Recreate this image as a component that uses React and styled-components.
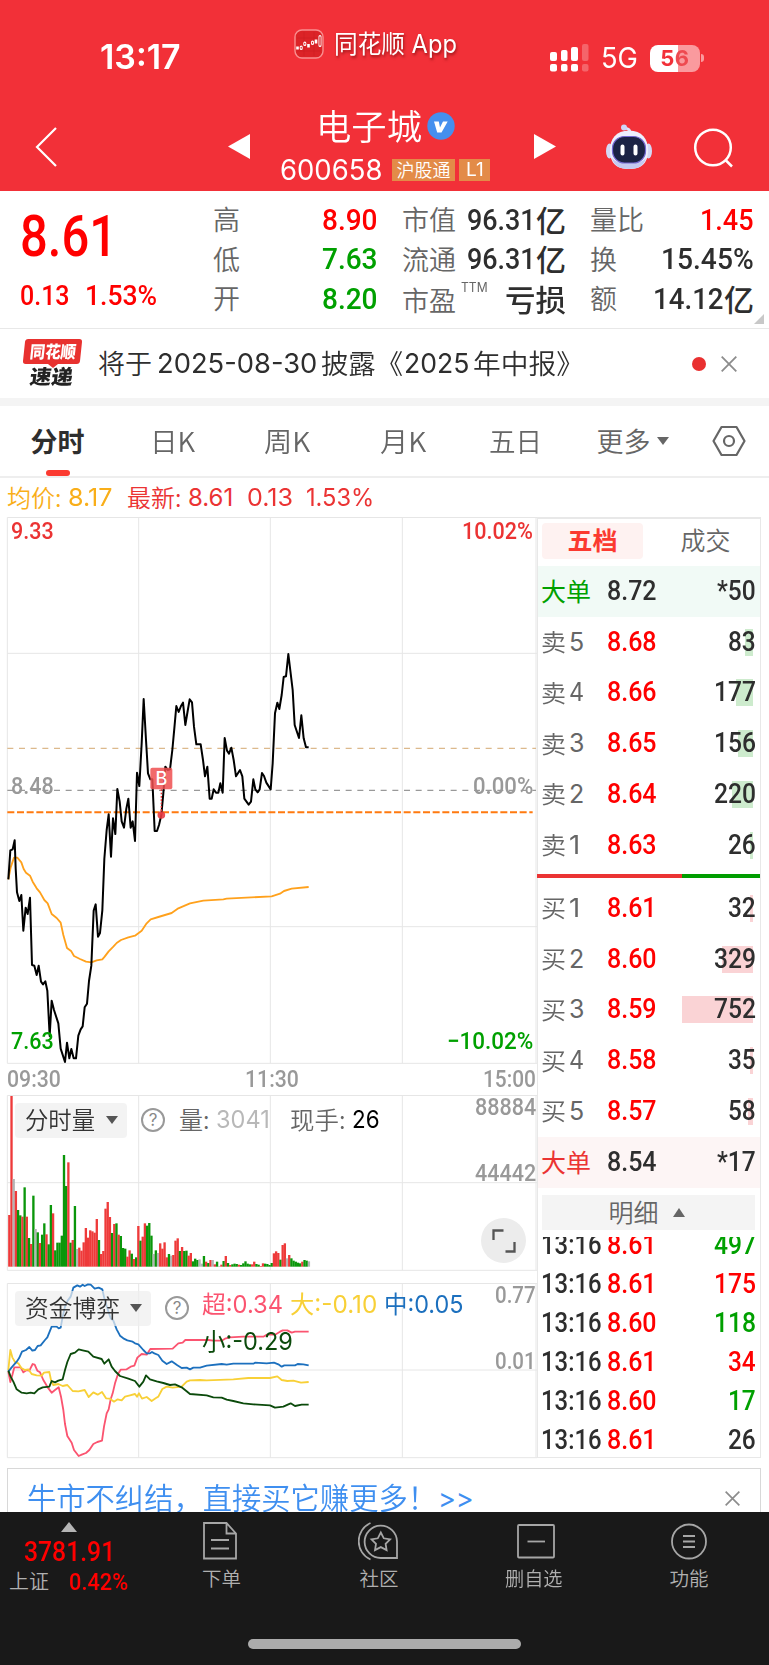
import React, { useLayoutEffect, useRef, useState } from "react";
import styled, { createGlobalStyle } from "styled-components";

const CJK = '"Noto Sans CJK SC", sans-serif';
const DIN = 'Roboto, "Noto Sans CJK SC", sans-serif';
const SF = 'Inter, "Noto Sans CJK SC", sans-serif';

const RED = "#ff0000";
const GREEN = "#00a000";
const INK = "#2e2e2e";
const GREY = "#666666";
const GRID = "#e6e6e6";

const GlobalStyle = createGlobalStyle`
  * { box-sizing: border-box; }
  body { margin: 0; background: #fff; font-family: ${CJK}; color: ${INK}; }
`;

/* Text squeezed or stretched horizontally so that it fills a given width. */
const FitBox = styled.span`
  display: inline-block;
  flex: none;
  width: ${(p) => p.$w}px;
  white-space: pre;
  line-height: 1;
`;
const FitInner = styled.span`
  display: inline-block;
  transform-origin: 0 50%;
`;
function Fit({ w, className, children }) {
  const ref = useRef(null);
  const [k, setK] = useState(1);
  useLayoutEffect(() => {
    if (ref.current.offsetWidth) setK(w / ref.current.offsetWidth);
  }, [w, children]);
  return (
    <FitBox $w={w} className={className}>
      <FitInner ref={ref} style={{ transform: `scaleX(${k})` }}>{children}</FitInner>
    </FitBox>
  );
}

const Digits = styled(Fit)`
  font-family: ${DIN};
  font-size: ${(p) => p.$size || 27}px;
  font-weight: ${(p) => p.$weight || 500};
  color: ${(p) => p.$color || INK};
`;
const Sans = styled(Fit)`
  font-family: ${SF};
  font-size: ${(p) => p.$size || 24}px;
  font-weight: ${(p) => p.$weight || 400};
  color: ${(p) => p.$color || GREY};
`;
const Han = styled(Fit)`
  font-family: ${CJK};
  font-size: ${(p) => p.$size || 27}px;
  font-weight: ${(p) => p.$weight || 350};
  color: ${(p) => p.$color || GREY};
  translate: 0 -0.05em;
`;

const Screen = styled.div`
  width: 769px;
  height: 1665px;
  overflow: hidden;
  display: flex;
  flex-direction: column;
  background: #fff;
`;

/* ---------- header ---------- */
const Header = styled.header`
  flex: none;
  height: 191px;
  background: #f23038;
  display: flex;
  flex-direction: column;
`;
const StatusBar = styled.div`
  height: 102px;
  padding: 29px 64px 0 100px;
  display: flex;
  align-items: flex-start;
`;
const Clock = styled.div`
  width: 194px;
  padding-top: 12px;
`;
const AppBadge = styled.div`
  display: flex;
  align-items: center;
  gap: 10px;
  height: 30px;
  width: 256px;
  text-shadow: 1px 2px 3px rgba(90, 0, 0, 0.6);
`;
const Radio = styled.div`
  display: flex;
  align-items: center;
  height: 28px;
  margin-top: 15px;
  gap: 12px;
`;
const Battery = styled.div`
  width: 50px;
  height: 27px;
  border-radius: 8px;
  background: linear-gradient(90deg, #fff 56%, #fa9a9e 56%);
  display: flex;
  align-items: center;
  justify-content: center;
`;
const BatteryTip = styled.div`
  width: 3px;
  height: 8px;
  margin-left: -11px;
  border-radius: 0 3px 3px 0;
  background: #fa9a9e;
`;
const BatteryText = styled.span`
  font: 700 22px/1 ${SF};
  letter-spacing: 0.5px;
  background: linear-gradient(90deg, #f23038 50%, #ee4a50 50%);
  background-clip: text;
  color: transparent;
`;
const TitleBar = styled.div`
  height: 89px;
  padding: 0 35px;
  display: grid;
  grid-template-columns: 193px 37px 269px 71px 88px 1fr;
`;
const TitleSlot = styled.div`
  padding-top: ${(p) => p.$top}px;
  svg { display: block; }
`;
const StockTitle = styled.div`
  padding-left: 15px;
  padding-top: 5px;
`;
const NameRow = styled.div`
  display: flex;
  align-items: center;
  gap: 5px;
  height: 38px;
  padding-left: 36px;
`;
const CodeRow = styled.div`
  display: flex;
  align-items: center;
  height: 22px;
  margin-top: 14px;
`;
const MarketTag = styled.span`
  display: flex;
  align-items: center;
  justify-content: center;
  width: ${(p) => p.$w}px;
  height: 22px;
  margin-left: ${(p) => p.$gap}px;
  background: #e38b48;
`;

/* ---------- quote ---------- */
const QuotePanel = styled.section`
  flex: none;
  position: relative;
  height: 138px;
  padding: 9px 15px 0 20px;
  display: grid;
  grid-template-columns: 169px 165px 164px 164px;
  column-gap: 24px;
  border-bottom: 1px solid #e8e8e8;
`;
const LastPrice = styled.div`
  padding: 8px 0 0 0;
  display: flex;
  flex-direction: column;
  gap: 17px;
`;
const ChangeRow = styled.div`
  display: flex;
  gap: 15px;
`;
const StatColumn = styled.div`
  display: flex;
  flex-direction: column;
`;
const Stat = styled.div`
  height: 39.5px;
  display: flex;
  align-items: center;
  justify-content: space-between;
`;
const StatValue = styled.span`
  display: flex;
  align-items: center;
`;
const LabelWithMark = styled.span`
  display: flex;
  align-items: flex-start;
  gap: 5px;
  padding-top: 3px;
`;
const TtmMark = styled(Sans)`
  margin-top: -6px;
`;
const CornerMark = styled.i`
  position: absolute;
  right: 5px;
  bottom: 4px;
  border-left: 10px solid transparent;
  border-bottom: 10px solid #c8c8c8;
`;

/* ---------- news ---------- */
const NewsRow = styled.section`
  flex: none;
  height: 77px;
  border-bottom: 8px solid #f4f4f4;
  padding: 0 32px 0 24px;
  display: flex;
  align-items: center;
`;
const NewsLogo = styled.div`
  width: 57px;
  height: 48px;
  margin-top: -2px;
  font: 900 18px/1 ${CJK};
`;
const LogoTop = styled.div`
  height: 25px;
  background: #e8312f;
  border-radius: 3px;
  transform: skewX(-6deg);
  display: flex;
  align-items: center;
  justify-content: center;
`;
const LogoNotch = styled.i`
  display: block;
  width: 0;
  margin: 0 auto -1px;
  border: 5px solid transparent;
  border-top: 4px solid #e8312f;
  border-bottom: 0;
`;
const LogoBottom = styled.div`
  padding-left: 6px;
  transform: skewX(-8deg);
  line-height: 20px;
`;
const NewsText = styled.p`
  flex: 1;
  margin: 0 0 0 17px;
  display: flex;
  align-items: center;
`;
const Gap = styled.i`
  flex: none;
  width: ${(p) => p.$w}px;
`;
const UnreadDot = styled.i`
  width: 14px;
  height: 14px;
  border-radius: 50%;
  background: #e93030;
  margin-right: 15px;
`;

/* ---------- tabs ---------- */
const Tabs = styled.nav`
  flex: none;
  height: 72px;
  border-bottom: 2px solid #eeeeee;
  display: grid;
  grid-template-columns: 115px 115px 114px 118px 107px 127px 65px;
  align-items: center;
`;
const Tab = styled.div`
  position: relative;
  height: 70px;
  display: flex;
  align-items: center;
  justify-content: center;
  gap: 6px;
  &::after {
    content: "";
    display: ${(p) => (p.$active ? "block" : "none")};
    position: absolute;
    bottom: 0;
    left: 46px;
    width: 24px;
    height: 6px;
    border-radius: 3px;
    background: #fb3a30;
  }
`;
const Caret = styled.i`
  width: 0;
  height: 0;
  border: ${(p) => p.$half || 6}px solid transparent;
  ${(p) => (p.$up ? "border-top: 0; border-bottom" : "border-bottom: 0; border-top")}: ${(p) => p.$h || 8}px solid
    ${(p) => p.$color || GREY};
`;
const Summary = styled.div`
  flex: none;
  height: 39px;
  padding: 1px 0 0 7px;
  display: flex;
  align-items: center;
`;

/* ---------- market area ---------- */
const Market = styled.main`
  flex: none;
  height: 951px;
  display: flex;
`;
const Charts = styled.div`
  width: 537px;
  display: flex;
  flex-direction: column;
`;
const Pane = styled.div`
  position: relative;
  flex: none;
  height: ${(p) => p.$h}px;
  margin-bottom: ${(p) => p.$gap || 0}px;
  svg { display: block; }
`;
const PaneLabel = styled.span`
  position: absolute;
  left: ${(p) => p.$x}px;
  top: ${(p) => p.$y}px;
  line-height: 1;
  display: flex;
`;
const TimeAxis = styled.div`
  flex: none;
  height: 28px;
  margin-top: -3px;
  padding: 0 1px 0 7px;
  display: flex;
  justify-content: space-between;
  align-items: flex-start;
`;
const PaneHead = styled.div`
  position: absolute;
  left: 15px;
  top: 7px;
  height: 36px;
  display: flex;
  align-items: center;
`;
const IndicatorPill = styled.div`
  flex: none;
  width: ${(p) => p.$w}px;
  height: 35px;
  padding: 0 9px 0 10px;
  border-radius: 4px;
  background: rgba(238, 238, 238, 0.72);
  display: flex;
  align-items: center;
  justify-content: space-between;
  margin-right: 14px;
`;
const ExpandButton = styled.div`
  position: absolute;
  left: 481px;
  top: 123px;
  width: 45px;
  height: 45px;
  border-radius: 50%;
  background: #ececec;
  display: grid;
  place-items: center;
`;

/* ---------- order book ---------- */
const Book = styled.aside`
  width: 224px;
  height: 941px;
  border: 1px solid #e8e8e8;
  border-top-width: 2px;
  display: flex;
  flex-direction: column;
`;
const BookTabs = styled.div`
  flex: none;
  height: 47px;
  padding: 4px;
  display: grid;
  grid-template-columns: 101px 1fr;
  column-gap: 12px;
`;
const BookTab = styled.div`
  height: 36px;
  padding-bottom: 1px;
  border-radius: 4px;
  display: flex;
  align-items: center;
  justify-content: center;
  background: ${(p) => (p.$active ? "#fef2f1" : "transparent")};
`;
const Level = styled.div`
  flex: none;
  height: 50.75px;
  padding: 0 4px 0 3px;
  display: grid;
  grid-template-columns: 66px 1fr auto;
  align-items: center;
  background: ${(p) => p.$bg || "transparent"};
`;
const LevelName = styled.span`
  display: flex;
  align-items: center;
  gap: 3px;
`;
const Volume = styled.span`
  height: 27px;
  width: 74px;
  display: flex;
  align-items: center;
  justify-content: flex-end;
  background: linear-gradient(${(p) => p.$color}, ${(p) => p.$color}) no-repeat;
  background-size: ${(p) => p.$bar}px 27px;
  background-position: calc(100% - 3px) 0;
`;
const Ratio = styled.div`
  flex: none;
  height: 4px;
  margin: 3px 0 5.5px -1px;
  background: linear-gradient(90deg, #eb3333 145px, #009d00 145px);
`;
const DetailHead = styled.div`
  flex: none;
  height: 35px;
  margin: 7px 5px 7px 4px;
  padding-right: 4px;
  background: #f4f4f4;
  display: flex;
  align-items: center;
  justify-content: center;
  gap: 14px;
`;
const Trades = styled.div`
  flex: 1;
  min-height: 0;
  overflow: hidden;
  display: flex;
  flex-direction: column;
  justify-content: flex-end;
  margin-bottom: -2.5px;
`;
const Trade = styled.div`
  flex: none;
  height: 39px;
  padding: 0 4px 0 3px;
  display: grid;
  grid-template-columns: 66px 1fr auto;
  align-items: center;
`;

/* ---------- promo + bottom nav ---------- */
const Promo = styled.div`
  flex: 1;
  margin: 0 8px 0 7px;
  border: 1px solid #d8d8d8;
  border-bottom: 0;
  padding: 14px 20px 0 19px;
  display: flex;
  justify-content: space-between;
  overflow: hidden;
`;
const PromoText = styled.span`
  display: flex;
  align-items: center;
  height: 30px;
`;
const BottomNav = styled.footer`
  flex: none;
  height: 153px;
  background: #191919;
  display: flex;
  flex-direction: column;
  align-items: center;
  justify-content: space-between;
  padding-bottom: 16px;
`;
const NavItems = styled.div`
  width: 100%;
  display: grid;
  grid-template-columns: 141px 158px 158px 157px 150px;
`;
const IndexCell = styled.div`
  padding: 10px 0 0 9px;
`;
const IndexTop = styled.div`
  display: flex;
  flex-direction: column;
  align-items: center;
  width: 120px;
  gap: 6px;
`;
const IndexRow = styled.div`
  display: flex;
  align-items: center;
  gap: 20px;
  margin-top: 4px;
`;
const NavItem = styled.div`
  padding-top: 9px;
  display: flex;
  flex-direction: column;
  align-items: center;
  gap: 8px;
`;
const NavLabel = styled(Han)`
  margin-left: ${(p) => p.$shift || 0}px;
`;
const HomeBar = styled.div`
  width: 273px;
  height: 10px;
  border-radius: 5px;
  background: #acacac;
`;

/* ---------- icons ---------- */
const AppIcon = () => (
  <svg width="30" height="30" viewBox="0 0 30 30" fill="none">
    <rect x="1" y="1" width="28" height="28" rx="7" fill="#dc2327" stroke="#f98f90" strokeWidth="1.4" />
    <path d="M3 9H27M3 22H27M10 3V27M20 3V27" stroke="#c81e22" strokeWidth=".5" />
    <path d="M3.500 17.500V20.500M14.500 15V18.500M22 10.500V14.500" stroke="#fff" strokeWidth="2.600" />
    <path d="M7.200 18v1.500M10.800 14v1.500M18.500 13v1.500M26 7.500v9" stroke="#fff" strokeWidth="3" strokeLinecap="round" />
    <path d="M7.200 18.500v.5M10.800 14.500v.5M18.500 13.500v.5M26 8v8" stroke="#dc2327" strokeWidth="1.300" strokeLinecap="round" />
  </svg>
);
const SignalIcon = () => (
  <svg width="39" height="28" viewBox="0 0 39 28" fill="#fff">
    <rect x="0" y="8" width="7" height="9" rx="2" />
    <rect x="11" y="6" width="6.500" height="11" rx="2" />
    <rect x="21" y="3" width="7" height="14" rx="2" />
    <rect x="32" y="0" width="6.500" height="17" rx="2" opacity=".25" />
    <rect x="0" y="20" width="7" height="7.500" rx="2" />
    <rect x="11" y="20" width="6.500" height="7.500" rx="2" />
    <rect x="21" y="20" width="7" height="7.500" rx="2" />
    <rect x="32" y="20" width="6.500" height="7.500" rx="2" opacity=".25" />
  </svg>
);
const BackIcon = () => (
  <svg width="22" height="40" viewBox="0 0 22 40" fill="none" stroke="#fff" strokeWidth="2.200">
    <path d="M21 1L2 20L21 39" />
  </svg>
);
const PlayIcon = ({ left }) => (
  <svg width="22" height="25" viewBox="0 0 22 25" fill="#fff">
    <path d={left ? "M22 0V25L0 12.500Z" : "M0 0V25L22 12.500Z"} />
  </svg>
);
const VerifiedIcon = () => (
  <svg width="28" height="28" viewBox="0 0 28 28">
    <circle cx="14" cy="14" r="13.700" fill="#458fee" />
    <path d="M7 9.500h4.800l1.200 6l3-6h4.700l-6.200 11h-4.300z" fill="#fff" />
  </svg>
);
const RobotIcon = () => (
  <svg width="48" height="46" viewBox="0 0 48 46">
    <path d="M25 8C25 4.500 22 5 19.500 3.500" stroke="#dfe3fb" strokeWidth="2.500" fill="none" />
    <circle cx="19" cy="3.500" r="3" fill="#cfd5f7" />
    <ellipse cx="4.500" cy="27" rx="3.500" ry="7.500" fill="#d4d8f5" />
    <ellipse cx="43.500" cy="27" rx="3.500" ry="7.500" fill="#d4d8f5" />
    <path d="M24 6.500C37 6.500 43 15 43 26C43 40 36 45 24 45S5 40 5 26C5 15 11 6.500 24 6.500Z" fill="#edeffd" />
    <path d="M24 39C33 39 38 38 41 34C39 41.500 34 45 24 45S9 41.500 7 34C10 38 15 39 24 39Z" fill="#c5c9f0" />
    <rect x="7.500" y="12.500" width="33" height="26.500" rx="12" fill="#1c2344" stroke="#7468d0" strokeWidth="1.200" />
    <path d="M17.500 22.500v7M30.500 22.500v7" stroke="#fff" strokeWidth="4" strokeLinecap="round" />
  </svg>
);
const SearchIcon = () => (
  <svg width="41" height="40" viewBox="0 0 41 40" fill="none" stroke="#fff" strokeWidth="2.500">
    <circle cx="20" cy="19.500" r="17.800" />
    <path d="M32.500 32L39 38.500" />
  </svg>
);
const CloseIcon = ({ size = 16 }) => (
  <svg width={size} height={size} viewBox="0 0 16 16" stroke="#8c8c8c" strokeWidth="1.800">
    <path d="M.7 .7L15.300 15.300M15.300 .7L.7 15.300" />
  </svg>
);
const HexIcon = () => (
  <svg width="34" height="32" viewBox="0 0 34 32" fill="none" stroke="#666" strokeWidth="2.200">
    <path d="M9.500 2H24.500L32.500 16L24.500 30H9.500L1.500 16Z" strokeLinejoin="round" />
    <circle cx="17" cy="16" r="5" />
  </svg>
);
const HelpMark = styled.span`
  flex: none;
  width: 24px;
  height: 24px;
  border: 2px solid #999;
  border-radius: 50%;
  display: grid;
  place-items: center;
  font: 400 17px/1 ${SF};
  color: #888;
`;
const ExpandIcon = () => (
  <svg width="24" height="24" viewBox="0 0 24 24" fill="none" stroke="#555" strokeWidth="2.300">
    <path d="M1.500 11V1.500H11.500M13.500 22.500H22.500V13" />
  </svg>
);
const navSvg = { width: 40, height: 40, viewBox: "0 0 40 40", fill: "none", stroke: "#a6a6a6", strokeWidth: 1.8 };
const OrderIcon = () => (
  <svg {...navSvg}>
    <path d="M5 2H26.500L36 12.500V37.500H4V2ZM26.500 2V12.500H36M11 19H29M11 27.500H29" />
  </svg>
);
const CommunityIcon = () => (
  <svg {...navSvg}>
    <path d="M39 37V20.500A16.200 16.200 0 1 0 23 37Z" />
    <path d="M12.500 2A20 20 0 0 0 12.500 38.500" />
    <path d="M22.800 11.500l3 5.800l6.300 1l-4.500 4.500l1 6.300l-5.800-3l-5.800 3l1-6.300l-4.500-4.500l6.300-1z" />
  </svg>
);
const RemoveIcon = () => (
  <svg {...navSvg}>
    <rect x="2" y="4" width="36" height="32.500" rx="1" />
    <path d="M11.500 20.500H29" />
  </svg>
);
const MoreIcon = () => (
  <svg {...navSvg}>
    <circle cx="20" cy="20.500" r="17" />
    <path d="M14 15H26M14 20.500H26M14 26H26" />
  </svg>
);

/* ---------- data ---------- */
const PRICE =
  "25,1108 31,1021 38,1018 44,991 47,1075 51,1147 58,1173 64,1155 70,1262 77,1193 83,1212 90,1163 96,1365 103,1367 110,1395 116,1367 123,1415 129,1423 136,1414 142,1442 149,1578 155,1472 162,1500 175,1540 182,1616 195,1656 201,1598 208,1645 214,1617 221,1645 228,1645 235,1577 242,1558 248,1549 254,1492 261,1481 267,1413 274,1367 281,1202 287,1183 294,1280 300,1269 307,1201 313,1047 320,960 326,913 333,1040 339,925 346,972 352,837 359,875 365,934 372,953 379,896 385,866 392,953 398,934 405,993 411,788 418,828 425,700 431,567 438,690 444,790 451,808 457,808 464,963 471,963 477,945 484,915 490,850 496,770 503,780 510,778 517,720 523,655 529,588 536,606 543,588 549,578 556,645 563,603 569,568 576,577 582,650 589,703 602,703 609,750 615,799 622,770 629,866 635,866 641,838 648,848 655,848 661,820 668,848 674,684 681,722 687,731 694,713 701,750 708,799 720,780 727,799 733,866 746,884 753,875 760,808 766,838 773,847 779,838 786,789 792,798 799,818 812,838 818,760 825,610 832,578 838,597 845,555 851,501 858,499 865,432 872,490 878,540 884,645 897,684 904,616 911,685 918,712 926,712";
const AVERAGE =
  "25,1108 32,1072 42,1043 52,1043 64,1057 71,1077 78,1088 90,1097 98,1115 110,1135 120,1147 133,1170 143,1180 155,1212 170,1224 182,1238 190,1275 201,1314 214,1324 222,1338 240,1347 258,1355 274,1357 290,1351 307,1348 314,1340 326,1324 340,1310 350,1299 363,1290 385,1282 405,1277 425,1262 440,1240 452,1228 475,1221 515,1209 535,1195 570,1180 610,1172 670,1168 680,1166 815,1159 840,1151 852,1143 875,1136 926,1131";
const VOLUME =
  "r375 r18 n267 r303 g360 g376 r380 g292 r380 g444 r462 g317 n417 g427 r459 g434 g400 r433 g463 g345 r370 g481 g458 g458 g437 g195 g288 r217 g458 r450 g348 n477 r473 r482 r457 r414 r443 r421 r424 r428 r387 g450 r492 r483 r356 r336 r381 g429 r402 g400 r434 g438 g474 g476 r500 r481 g491 r507 g502 r408 g452 r440 r400 g407 g399 g437 n492 g481 n489 r460 r476 r457 r502 g492 n497 r495 r452 r445 g483 r471 g483 g482 r497 r489 g514 g506 g510 n508 n521 g498 r515 g519 r510 n510 r523 g515 n528 r524 g513 r498 g519 r525 g523 g521 g522 r524 g525 g520 g514 g521 g523 r523 r515 g522 g524 r528 r520 g521 g522 g525 g519 r490 r484 r489 g509 r465 r460 n505 r495 g505 g512 g515 g518 g520 r515 g510 g512 n514";
const BAR = { r: "#ee3a3a", g: "#0a960a", n: "#b4b4b4" };
const FLOWS = [
  ["#fb5470", "25,305 31,336 37,315 43,292 62,292 70,307 80,300 88,302 98,282 104,284 112,302 120,307 130,330 143,352 155,368 165,360 176,352 183,380 190,420 195,462 202,498 215,518 222,540 236,558 247,553 258,549 268,540 280,522 292,516 306,512 312,470 320,430 326,418 332,388 338,370 345,340 354,312 362,299 380,298 392,290 403,287 412,263 425,252 440,254 451,237 518,236 535,220 548,218 556,210 625,210 640,212 665,212 675,206 690,202 730,200 790,200 800,194 825,194 840,185 848,181 862,181 875,188 885,185 926,185"],
  ["#f8d037", "25,300 31,240 37,262 45,276 55,280 64,294 75,300 85,298 95,312 110,316 125,317 132,308 148,306 153,330 160,345 175,342 188,348 202,345 218,363 235,364 254,360 266,381 280,367 293,374 306,366 318,385 330,386 342,395 353,388 365,391 375,380 390,376 405,372 411,380 417,370 426,386 440,381 455,393 468,384 475,380 487,357 500,350 518,353 545,350 560,335 570,331 600,330 620,331 700,328 745,324 810,324 832,319 845,330 862,333 880,332 903,338 926,336"],
  ["#1c70be", "25,305 35,292 50,275 57,265 66,245 78,240 88,231 97,242 105,240 113,228 122,226 135,210 142,202 155,170 170,170 176,175 182,173 188,140 195,110 203,92 212,80 220,53 232,46 240,50 248,44 254,48 264,43 272,44 284,56 296,53 307,58 313,85 322,115 332,145 340,152 350,178 360,197 370,205 382,211 398,215 405,220 415,223 430,240 440,250 450,250 456,246 463,250 475,255 487,272 500,282 515,274 532,286 545,294 560,293 570,298 580,293 600,293 620,287 665,282 680,284 700,281 760,281 765,278 800,280 822,278 835,283 845,290 853,286 885,286 893,282 910,283 926,286"],
  ["#0b4a0b", "25,302 32,320 40,335 50,358 65,368 80,370 92,368 103,370 115,358 128,352 148,350 155,333 165,337 175,332 188,328 195,300 202,276 212,252 225,248 236,238 248,241 265,245 280,260 305,267 313,281 326,268 335,290 345,303 360,318 385,326 405,333 418,350 430,335 438,316 450,328 470,334 490,339 510,345 525,343 545,352 570,372 620,376 640,382 665,383 680,389 700,393 730,400 760,403 810,406 825,413 850,410 865,403 872,400 885,408 905,404 926,404"],
];
const SELLS = [["5", "8.68", "83", 8], ["4", "8.66", "177", 17], ["3", "8.65", "156", 15], ["2", "8.64", "220", 21], ["1", "8.63", "26", 3]];
const BUYS = [["1", "8.61", "32", 3], ["2", "8.60", "329", 31], ["3", "8.59", "752", 71], ["4", "8.58", "35", 3], ["5", "8.57", "58", 5]];
const TRADES = [["8.61", "497", GREEN], ["8.61", "175", RED], ["8.60", "118", GREEN], ["8.61", "34", RED], ["8.60", "17", GREEN], ["8.61", "26", INK]];

const Grid = ({ top, mid, bottom }) => (
  <g stroke={GRID} strokeWidth="3" fill="none">
    <path d={`M22 ${top}V${bottom}M416 ${top}V${bottom}M811 ${top}V${bottom}M1207 ${top}V${bottom}M1608 ${top}V${bottom}`} />
    {[top, ...mid, bottom].map((y) => <path key={y} d={`M22 ${y}H1611`} />)}
  </g>
);

function PricePane() {
  return (
    <Pane $h={553}>
      <svg width="537" height="553" viewBox="0 21 1611 1659">
        <Grid top={22.5} mid={[430, 1250]} bottom={1660} />
        <path d="M22 715H1608" stroke="#dcb98c" strokeWidth="3.500" strokeDasharray="18 17" />
        <path d="M22 841H1608" stroke="#999" strokeWidth="4" strokeDasharray="18 17" />
        <polyline points={AVERAGE} fill="none" stroke="#ffa11c" strokeWidth="5.500" strokeLinejoin="round" />
        <path d="M22 907H1598" stroke="#ff7a0f" strokeWidth="6" strokeDasharray="21 8" />
        <polyline points={PRICE} fill="none" stroke="#000" strokeWidth="6" strokeLinejoin="round" />
        <path d="M484 838V915" stroke="#eb3333" strokeWidth="4" strokeDasharray="5 5" />
        <circle cx="484" cy="915" r="11.500" fill="#e93a40" fillOpacity=".9" />
        <rect x="451" y="773" width="66" height="65" rx="6" fill="#ee4f50" fillOpacity=".85" />
        <text x="484" y="825" fontFamily="Inter, sans-serif" fontSize="54" fontWeight="500" fill="#fff" textAnchor="middle">B</text>
      </svg>
      <PaneLabel $x={10.5} $y={2}><Digits w={43} $size={24} $color="#eb3333">9.33</Digits></PaneLabel>
      <PaneLabel $x={462} $y={2}><Digits w={71} $size={24} $color="#eb3333">10.02%</Digits></PaneLabel>
      <PaneLabel $x={10.5} $y={257}><Digits w={43} $size={24} $color="#999">8.48</Digits></PaneLabel>
      <PaneLabel $x={473} $y={257}><Digits w={60} $size={24} $color="#999">0.00%</Digits></PaneLabel>
      <PaneLabel $x={10.5} $y={512}><Digits w={43} $size={24} $color={GREEN}>7.63</Digits></PaneLabel>
      <PaneLabel $x={447} $y={512}><Digits w={86} $size={24} $color={GREEN}>−10.02%</Digits></PaneLabel>
    </Pane>
  );
}

function VolumePane() {
  return (
    <Pane $h={176} $gap={12}>
      <svg width="537" height="176" viewBox="0 15 1611 528">
        <Grid top={16.5} mid={[278]} bottom={541} />
        {VOLUME.split(" ").map((b, i) => {
          const y = Number(b.slice(1));
          return <rect key={i} x={24.5 + i * 6.56} y={y} width="7" height={530 - y} fill={BAR[b[0]]} />;
        })}
      </svg>
      <PaneHead>
        <IndicatorPill $w={112}>
          <Han w={70} $size={24} $color="#333">分时量</Han>
          <Caret $color="#555" $half={6.5} />
        </IndicatorPill>
        <HelpMark>?</HelpMark>
        <Gap $w={14} />
        <Han w={30} $size={24}>量:</Han>
        <Gap $w={7} />
        <Sans w={54} $size={24} $color="#b8b8b8">3041</Sans>
        <Gap $w={20} />
        <Han w={55} $size={24}>现手:</Han>
        <Gap $w={7} />
        <Sans w={28} $size={24} $color="#000">26</Sans>
      </PaneHead>
      <PaneLabel $x={475} $y={0}><Digits w={61} $size={24} $color="#999">88884</Digits></PaneLabel>
      <PaneLabel $x={475} $y={66}><Digits w={61} $size={24} $color="#999">44442</Digits></PaneLabel>
      <ExpandButton><ExpandIcon /></ExpandButton>
    </Pane>
  );
}

function FlowPane() {
  return (
    <Pane $h={176}>
      <svg width="537" height="176" viewBox="0 39 1611 528">
        <Grid top={40.5} mid={[300]} bottom={563} />
        {FLOWS.map(([c, pts]) => (
          <polyline key={c} points={pts} fill="none" stroke={c} strokeWidth="5.500" strokeLinejoin="round" />
        ))}
      </svg>
      <PaneHead>
        <IndicatorPill $w={136}>
          <Han w={95} $size={24} $color="#333">资金博弈</Han>
          <Caret $color="#555" $half={6.5} />
        </IndicatorPill>
        <HelpMark>?</HelpMark>
      </PaneHead>
      <PaneLabel $x={202} $y={10}><Sans w={81} $color="#fb5470">超:0.34</Sans></PaneLabel>
      <PaneLabel $x={290} $y={10}><Sans w={87} $color="#f8d037">大:-0.10</Sans></PaneLabel>
      <PaneLabel $x={384} $y={10}><Sans w={79} $color="#1c70be">中:0.05</Sans></PaneLabel>
      <PaneLabel $x={202} $y={47}><Sans w={91} $color="#0b4a0b">小:-0.29</Sans></PaneLabel>
      <PaneLabel $x={495} $y={0}><Digits w={41} $size={24} $color="#999">0.77</Digits></PaneLabel>
      <PaneLabel $x={495} $y={66}><Digits w={41} $size={24} $color="#999">0.01</Digits></PaneLabel>
    </Pane>
  );
}

const volWidth = (s) => s.length * 14;

const LevelRow = ({ side, color, row: [n, price, vol, bar] }) => (
  <Level>
    <LevelName>
      <Han w={25} $size={24}>{side}</Han>
      <Sans w={n === "1" ? 11 : 15} $size={25}>{n}</Sans>
    </LevelName>
    <Digits w={50} $color={RED}>{price}</Digits>
    <Volume $bar={bar} $color={color}><Digits w={volWidth(vol)}>{vol}</Digits></Volume>
  </Level>
);
const BigOrder = ({ bg, color, price, vol }) => (
  <Level $bg={bg}>
    <Han w={50} $size={25} $weight={400} $color={color}>大单</Han>
    <Digits w={50}>{price}</Digits>
    <Digits w={39}>{vol}</Digits>
  </Level>
);

function OrderBook() {
  return (
    <Book>
      <BookTabs>
        <BookTab $active><Han w={50} $size={25} $weight={700} $color="#fb3a30">五档</Han></BookTab>
        <BookTab><Han w={50} $size={25}>成交</Han></BookTab>
      </BookTabs>
      <BigOrder bg="#f1faf6" color={GREEN} price="8.72" vol="*50" />
      {SELLS.map((r) => <LevelRow key={r[0]} side="卖" color="#cdebcd" row={r} />)}
      <Ratio />
      {BUYS.map((r) => <LevelRow key={r[0]} side="买" color="#fad3d5" row={r} />)}
      <BigOrder bg="#fdf5f5" color="#eb3333" price="8.54" vol="*17" />
      <DetailHead>
        <Han w={50} $size={25}>明细</Han>
        <Caret $up $half={6.5} $h={9.5} />
      </DetailHead>
      <Trades>
        {TRADES.map(([price, vol, color], i) => (
          <Trade key={i}>
            <Digits w={61}>13:16</Digits>
            <Digits w={50} $color={RED}>{price}</Digits>
            <Digits w={volWidth(vol)} $color={color}>{vol}</Digits>
          </Trade>
        ))}
      </Trades>
    </Book>
  );
}

export default function App() {
  return (
    <Screen>
      <GlobalStyle />
      <Header>
        <StatusBar>
          <Clock><Sans w={81} $size={33.5} $weight={600} $color="#fff">13:17</Sans></Clock>
          <AppBadge>
            <AppIcon />
            <Sans w={123} $size={25} $color="#fff">同花顺 App</Sans>
          </AppBadge>
          <Radio>
            <SignalIcon />
            <Sans w={37} $size={28} $color="#fff">5G</Sans>
            <Battery><BatteryText>56</BatteryText></Battery>
            <BatteryTip />
          </Radio>
        </StatusBar>
        <TitleBar>
          <TitleSlot $top={25}><BackIcon /></TitleSlot>
          <TitleSlot $top={32}><PlayIcon left /></TitleSlot>
          <StockTitle>
            <NameRow>
              <Han w={106} $size={35} $color="#fff">电子城</Han>
              <VerifiedIcon />
            </NameRow>
            <CodeRow>
              <Sans w={102} $size={28} $color="#fff">600658</Sans>
              <MarketTag $w={63} $gap={10}><Han w={54} $size={18} $color="#fff">沪股通</Han></MarketTag>
              <MarketTag $w={31} $gap={4}><Sans w={18} $size={18} $color="#fff">L1</Sans></MarketTag>
            </CodeRow>
          </StockTitle>
          <TitleSlot $top={32}><PlayIcon /></TitleSlot>
          <TitleSlot $top={22}><RobotIcon /></TitleSlot>
          <TitleSlot $top={26}><SearchIcon /></TitleSlot>
        </TitleBar>
      </Header>

      <QuotePanel>
        <LastPrice>
          <Digits w={97} $size={57} $color={RED}>8.61</Digits>
          <ChangeRow>
            <Digits w={50} $size={28} $color={RED}>0.13</Digits>
            <Digits w={72} $size={28} $color={RED}>1.53%</Digits>
          </ChangeRow>
        </LastPrice>
        <StatColumn>
          <Stat><Han w={27}>高</Han><Digits w={56} $size={30} $color={RED}>8.90</Digits></Stat>
          <Stat><Han w={27}>低</Han><Digits w={56} $size={30} $color={GREEN}>7.63</Digits></Stat>
          <Stat><Han w={27}>开</Han><Digits w={56} $size={30} $color={GREEN}>8.20</Digits></Stat>
        </StatColumn>
        <StatColumn>
          <Stat>
            <Han w={54}>市值</Han>
            <StatValue><Digits w={69} $size={30}>96.31</Digits><Han w={30} $size={30} $weight={500} $color={INK}>亿</Han></StatValue>
          </Stat>
          <Stat>
            <Han w={54}>流通</Han>
            <StatValue><Digits w={69} $size={30}>96.31</Digits><Han w={30} $size={30} $weight={500} $color={INK}>亿</Han></StatValue>
          </Stat>
          <Stat>
            <LabelWithMark>
              <Han w={54}>市盈</Han>
              <TtmMark w={27} $size={13}>TTM</TtmMark>
            </LabelWithMark>
            <Han w={61} $size={30} $weight={500} $color={INK}>亏损</Han>
          </Stat>
        </StatColumn>
        <StatColumn>
          <Stat><Han w={54}>量比</Han><Digits w={54} $size={30} $color={RED}>1.45</Digits></Stat>
          <Stat><Han w={27}>换</Han><Digits w={93} $size={30}>15.45%</Digits></Stat>
          <Stat>
            <Han w={27}>额</Han>
            <StatValue><Digits w={71} $size={30}>14.12</Digits><Han w={30} $size={30} $weight={500} $color={INK}>亿</Han></StatValue>
          </Stat>
        </StatColumn>
        <CornerMark />
      </QuotePanel>

      <NewsRow>
        <NewsLogo>
          <LogoTop><Han w={46} $size={17} $weight={900} $color="#fff">同花顺</Han></LogoTop>
          <LogoNotch />
          <LogoBottom><Han w={43} $size={20} $weight={900} $color="#222">速递</Han></LogoBottom>
        </NewsLogo>
        <NewsText>
          <Han w={54} $color={INK}>将于</Han>
          <Gap $w={5} />
          <Sans w={160} $size={27} $color={INK}>2025-08-30</Sans>
          <Gap $w={4} />
          <Han w={82} $color={INK}>披露《</Han>
          <Gap $w={1} />
          <Sans w={65} $size={27} $color={INK}>2025</Sans>
          <Gap $w={4} />
          <Han w={111} $color={INK}>年中报》</Han>
        </NewsText>
        <UnreadDot />
        <CloseIcon />
      </NewsRow>

      <Tabs>
        <Tab $active><Han w={54} $weight={700} $color={INK}>分时</Han></Tab>
        <Tab><Han w={45}>日K</Han></Tab>
        <Tab><Han w={46}>周K</Han></Tab>
        <Tab><Han w={46}>月K</Han></Tab>
        <Tab><Han w={53}>五日</Han></Tab>
        <Tab><Han w={54}>更多</Han><Caret /></Tab>
        <Tab><HexIcon /></Tab>
      </Tabs>

      <Summary>
        <Han w={54} $size={24} $color="#f9ae19">均价:</Han>
        <Gap $w={7} />
        <Sans w={45} $size={24} $color="#f9ae19">8.17</Sans>
        <Gap $w={14} />
        <Han w={54} $size={24} $color="#eb3333">最新:</Han>
        <Gap $w={7} />
        <Sans w={45} $size={24} $color="#eb3333">8.61</Sans>
        <Gap $w={14} />
        <Sans w={46} $size={24} $color="#eb3333">0.13</Sans>
        <Gap $w={13} />
        <Sans w={68} $size={24} $color="#eb3333">1.53%</Sans>
      </Summary>

      <Market>
        <Charts>
          <PricePane />
          <TimeAxis>
            <Digits w={54} $size={24} $color="#999">09:30</Digits>
            <Digits w={54} $size={24} $color="#999">11:30</Digits>
            <Digits w={53} $size={24} $color="#999">15:00</Digits>
          </TimeAxis>
          <VolumePane />
          <FlowPane />
        </Charts>
        <OrderBook />
      </Market>

      <Promo>
        <PromoText>
          <Han w={410} $size={29.5} $color="#3f8ff0">牛市不纠结，直接买它赚更多！</Han>
          <Gap $w={1} />
          <Sans w={36} $size={27} $color="#3f8ff0">&gt;&gt;</Sans>
        </PromoText>
        <PromoText><CloseIcon size={15} /></PromoText>
      </Promo>

      <BottomNav>
        <NavItems>
          <IndexCell>
            <IndexTop>
              <Caret $up $half={8.5} $h={10} $color="#b5b5b5" />
              <Digits w={91} $size={28} $color={RED}>3781.91</Digits>
            </IndexTop>
            <IndexRow>
              <Han w={40} $size={20} $color="#b0b0b0">上证</Han>
              <Digits w={59} $size={24} $color={RED}>0.42%</Digits>
            </IndexRow>
          </IndexCell>
          <NavItem><OrderIcon /><NavLabel w={39} $shift={3} $size={19.5} $color="#b0b0b0">下单</NavLabel></NavItem>
          <NavItem><CommunityIcon /><NavLabel w={39} $shift={2} $size={19.5} $color="#b0b0b0">社区</NavLabel></NavItem>
          <NavItem><RemoveIcon /><NavLabel w={58} $shift={-4} $size={19.5} $color="#b0b0b0">删自选</NavLabel></NavItem>
          <NavItem><MoreIcon /><NavLabel w={39} $size={19.5} $color="#b0b0b0">功能</NavLabel></NavItem>
        </NavItems>
        <HomeBar />
      </BottomNav>
    </Screen>
  );
}
